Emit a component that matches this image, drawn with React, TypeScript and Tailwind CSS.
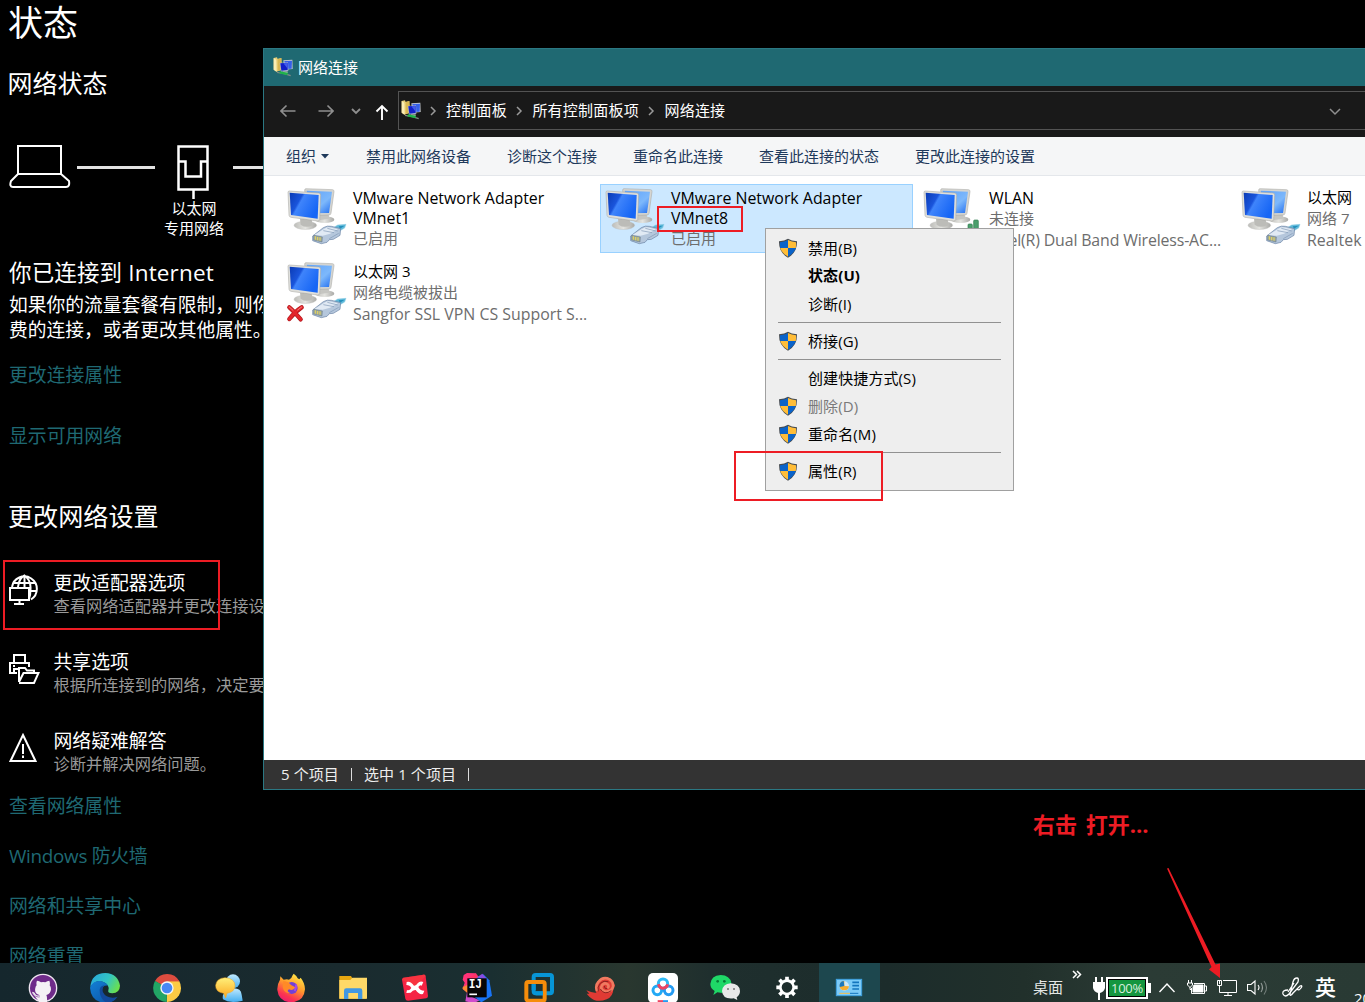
import React from "react";

/* ---------- Adapter icons ---------- */

type Badge = "cable" | "unplugged" | "wifi";

function AdapterIcon({ badge, id }: { badge: Badge; id: string }) {
  const screen = `screen-${id}`;
  const back = `back-${id}`;
  const stand = `stand-${id}`;
  return (
    <svg className="ml-[5px] mt-[3px] h-[57px] w-[60px] shrink-0 overflow-visible" viewBox="51 36 180 171">
      <defs>
        <linearGradient id={screen} x1="0" y1="0" x2="1" y2="0.5">
          <stop offset="0" stopColor="#0b3bb4" />
          <stop offset="0.38" stopColor="#1a55dc" />
          <stop offset="0.45" stopColor="#3f84fb" />
          <stop offset="1" stopColor="#1766f5" />
        </linearGradient>
        <linearGradient id={back} x1="0" y1="0" x2="1" y2="1">
          <stop offset="0" stopColor="#5fa2fa" />
          <stop offset="0.6" stopColor="#7db8fb" />
          <stop offset="1" stopColor="#1f6cf0" />
        </linearGradient>
        <linearGradient id={stand} x1="0" y1="0" x2="1" y2="0">
          <stop offset="0" stopColor="#bdbdb9" />
          <stop offset="0.5" stopColor="#e4e4e0" />
          <stop offset="1" stopColor="#a9a9a6" />
        </linearGradient>
      </defs>
      <ellipse cx="164" cy="131" rx="29" ry="10" fill={`url(#${stand})`} />
      <path d="M150 112 L175 108 L178 128 L150 132Z" fill="#c6c6c2" />
      <path d="M104 42 Q104 38 108 38 L188 41 Q193 42 192 47 L183 112 Q182 117 177 117 L112 119Z" fill="#d5d5d1" stroke="#a3a39f" strokeWidth="1.5" />
      <path d="M110 44 L186 47 L177 111 L118 112Z" fill={`url(#${back})`} />
      <ellipse cx="106" cy="148" rx="34" ry="12.5" fill={`url(#${stand})`} stroke="#b5b5b2" strokeWidth="1" />
      <path d="M90 128 L125 130 L128 148 Q108 158 92 146Z" fill="#bcbcb8" />
      <path d="M54 49 Q54 45 58 45 L147 51 Q153 52 152 58 L149 131 Q148 136 142 135 L63 124 Q58 123 57 118Z" fill="#dfdfdb" stroke="#a2a29e" strokeWidth="1.5" />
      <path d="M59 50 L146 57 L143 128 L63 117Z" fill={`url(#${screen})`} />
      {badge === "wifi" ? (
        <g fill="#4b9f6c" stroke="#2f7d4f" strokeWidth="2">
          <rect x="186" y="144" width="13" height="40" rx="3" />
          <rect x="203" y="132" width="14" height="52" rx="3" />
        </g>
      ) : (
        <g>
          <path d="M190 155 L203 147 L228 145 L224 156 L207 166Z" fill="#5fb9da" stroke="#8fcfe4" strokeWidth="1.5" />
          <path d="M206 151 L224 149 L210 158Z" fill="#238fbb" />
          <path d="M128 180 L160 155 Q172 148 184 151 L212 158 L210 178 L190 190 L178 191 L171 199 L154 203 L128 194Z" fill="#b5c7dc" stroke="#6681a3" strokeWidth="2" />
          <path d="M133 177 L163 158 Q173 152 184 155 L204 160 L180 173 L158 179Z" fill="#e1eaf4" />
          <path d="M160 164 L192 170 M172 157 L203 165 M178 188 L206 172" stroke="#7f97b5" strokeWidth="2" fill="none" />
          <path d="M131 178 L157 183 L156 198 L131 192Z" fill="#9fa99a" stroke="#5f7287" strokeWidth="1.5" />
          <path d="M136 181 V191 M143 183 V193 M150 184 V194" stroke="#e8d75c" strokeWidth="3" />
        </g>
      )}
      {badge === "unplugged" && (
        <g strokeLinecap="round">
          <path d="M58 172 Q70 182 92 208 M95 172 Q76 184 58 207" stroke="#b0171c" strokeWidth="13" fill="none" />
          <path d="M58 172 Q70 182 92 208 M95 172 Q76 184 58 207" stroke="#e3262c" strokeWidth="9" fill="none" />
          <path d="M58 171 L69 181 M95 171 L83 180" stroke="#f2817f" strokeWidth="3" fill="none" />
        </g>
      )}
    </svg>
  );
}

function NetworkFolderIcon() {
  return (
    <svg className="h-5 w-5 shrink-0" viewBox="0 0 60 60">
      <path d="M2 3 L12 1 L14 6 L25 3 L27 38 L10 44 L2 38Z" fill="#e9cf77" />
      <path d="M2 3 L10 8 L11 44 L2 38Z" fill="#fbedb3" />
      <path d="M14 6 L25 3 L26 38 L14 42Z" fill="#d9b752" />
      <path d="M31 10 L58 8 L59 36 L34 38Z" fill="#c5cad0" />
      <path d="M34 12 L57 11 L56 35 L38 36Z" fill="#3560e8" />
      <path d="M20 18 L45 16 L46 41 L24 44Z" fill="#b9bfd0" />
      <path d="M22 19 L44 17 L44 39 L25 41Z" fill="#1220c8" />
      <path d="M31 19 L43 18 L43 34Z" fill="#3f5bee" />
      <path d="M30 43 H44 V48 H30Z" fill="#b6bab6" />
      <path d="M12 46 L34 50 L53 56" stroke="#7f8c86" strokeWidth="4" fill="none" />
      <path d="M20 46 L44 51" stroke="#1fb34a" strokeWidth="7" fill="none" />
    </svg>
  );
}

function Shield() {
  return (
    <svg className="h-5 w-5 shrink-0" viewBox="0 0 60 60">
      <path d="M30 2 Q40 9 57 10 Q58 44 30 59 Q2 44 3 10 Q20 9 30 2Z" fill="#464b50" />
      <path d="M30 6 V30 H6.500 Q5.500 22 6 13 Q20 12 30 6Z" fill="#0a63c9" />
      <path d="M30 6 Q41 12 54 13 Q54.500 22 53.500 30 H30Z" fill="#ffbd38" />
      <path d="M6.500 30 H30 V56 Q11 45 6.500 30Z" fill="#ffbd38" />
      <path d="M30 30 H53.500 Q49 45 30 56Z" fill="#0a63c9" />
    </svg>
  );
}

/* ---------- Settings page ---------- */

function SettingLink({ children, className }: { children: React.ReactNode; className: string }) {
  return <a className={`block h-[26px] text-[18.85px] leading-[26px] text-[#1f6973] ${className}`}>{children}</a>;
}

function Option({ icon, title, text, className }: { icon: React.ReactNode; title: string; text: string; className: string }) {
  return (
    <div className={`flex h-12 ${className}`}>
      <div className="w-[44.5px] shrink-0">{icon}</div>
      <div>
        <div className="text-[18.85px] leading-6">{title}</div>
        <div className="text-[16.25px] leading-[22px] text-[#999]">{text}</div>
      </div>
    </div>
  );
}

function Settings() {
  return (
    <main className="h-[963px] w-[264px] overflow-hidden whitespace-nowrap pl-[9px] text-white">
      <h1 className="-ml-px h-[46px] text-[35px] leading-[45px]">状态</h1>
      <h2 className="-ml-[1.5px] mt-[22px] h-8 text-[25px] leading-[30px]">网络状态</h2>
      <div className="mt-[45px] flex h-[54px]">
        <svg className="h-11 w-[62px] shrink-0" viewBox="0 0 62 44" fill="none" stroke="#fff" strokeWidth="2">
          <path d="M9 1 H52 V29 H9Z M9 29 L2 36 Q0 42 4 42 H57 Q61 42 60 36 L52 29" />
        </svg>
        <div className="ml-[6px] mt-[21px] h-[3px] w-[78px] shrink-0 bg-[#e2e2e2]" />
        <svg className="ml-[21px] h-[54px] w-[34px] shrink-0" viewBox="0 0 34 54" fill="none" stroke="#fff" strokeWidth="2.500">
          <path d="M2.500 1.500 H31.500 V44.500 H2.500Z M2.500 16.500 H9.500 V31.500 H25 V16.500 H31.500 M17.500 45 V54" />
        </svg>
        <div className="ml-[23px] mt-[21px] h-[3px] w-[60px] shrink-0 bg-[#e2e2e2]" />
      </div>
      <div className="-mt-px ml-[145px] w-20 text-center text-[15px] leading-5">
        <div>以太网</div>
        <div>专用网络</div>
      </div>
      <h3 className="mt-5 h-[30px] text-[22.5px] leading-[30px] tracking-[0.15px]">你已连接到 Internet</h3>
      <p className="mt-1 text-[18.75px] leading-[25px]">
        如果你的流量套餐有限制，则你
        <br />
        费的连接，或者更改其他属性。
      </p>
      <SettingLink className="mt-5">更改连接属性</SettingLink>
      <SettingLink className="mt-[35px]">显示可用网络</SettingLink>
      <h2 className="-ml-px mt-[51px] h-[34px] text-[25.1px] leading-8">更改网络设置</h2>
      <Option
        className="mt-[37px]"
        title="更改适配器选项"
        text="查看网络适配器并更改连接设置"
        icon={
          <svg className="mt-[3px] h-8 w-[30px]" viewBox="0 0 30 32" fill="none" stroke="#fff" strokeWidth="2">
            <path d="M3 13 A12.500 12.500 0 1 1 22 25.500 M4 9 H26 M21 17 H28 M9 13 Q10 4 15.500 1.500 Q22 6 21.500 15 Q21.500 21 20 25 M15.500 1.500 V13" />
            <path d="M1 14 H20 V26 H1Z M10.500 26 V30 M5 30 H15" />
          </svg>
        }
      />
      <Option
        className="mt-[31px]"
        title="共享选项"
        text="根据所连接到的网络，决定要共享的内容"
        icon={
          <svg className="mt-[3px] h-8 w-[31px]" viewBox="0 0 31 32" fill="none" stroke="#fff" strokeWidth="2">
            <path d="M5 10 V2 H16 V10 M8 20 H1 V10 H20 V14 M4 13 H6 M5 20 V16 H11" />
            <path d="M10 29 V15 H16 L18 17.500 H25 V20 M10 30 H25 L29.500 20 H14.500 L10 29" />
          </svg>
        }
      />
      <Option
        className="mt-[31px]"
        title="网络疑难解答"
        text="诊断并解决网络问题。"
        icon={
          <svg className="mt-[4px] h-[30px] w-[28px]" viewBox="0 0 28 30" fill="none" stroke="#fff" strokeWidth="2">
            <path d="M14 2 L26.500 28 H1.500Z M14 11 V21 M14 22.500 V25" />
          </svg>
        }
      />
      <SettingLink className="mt-[16px]">查看网络属性</SettingLink>
      <SettingLink className="mt-6 tracking-[-0.3px]">Windows 防火墙</SettingLink>
      <SettingLink className="mt-6">网络和共享中心</SettingLink>
      <SettingLink className="mt-6">网络重置</SettingLink>
    </main>
  );
}

/* ---------- Network connections window ---------- */

function Crumb({ children }: { children: React.ReactNode }) {
  return (
    <>
      <svg className="mx-[9px] h-3 w-[7px] shrink-0" viewBox="0 0 7 12" fill="none" stroke="#9a9a9a" strokeWidth="1.500">
        <path d="M1 2 L5 6 L1 10" />
      </svg>
      <span className="mr-[0.5px] tracking-[0.22px]">{children}</span>
    </>
  );
}

interface AdapterProps {
  id: string;
  name: string[];
  details: string[];
  badge: Badge;
  selected?: boolean;
}

const isLatin = (line: string) => /^[\x20-\x7e]+$/.test(line);

function Adapter({ id, name, details, badge, selected }: AdapterProps) {
  return (
    <div className={selected ? "flex h-[69px] w-[313px] border border-[#99d1ff] bg-[#cce8ff]" : "flex h-[69px] w-[313px] border border-transparent"}>
      <div className="-ml-px flex">
        <AdapterIcon id={id} badge={badge} />
      </div>
      <div className={id === "wlan" ? "ml-[6px] mt-[2px] text-[15px] tracking-[-0.15px] text-[#6d6d6d]" : "ml-[6px] mt-[2px] text-[15px] text-[#6d6d6d]"}>
        {name.map((line) => (
          <div key={line} className={isLatin(line) ? "h-5 text-[15.9px] leading-[22px] tracking-normal text-black" : "h-5 leading-5 text-black"}>{line}</div>
        ))}
        {details.map((line) => (
          <div key={line} className={isLatin(line) ? "h-[21px] text-[15.9px] leading-6" : "h-[21px] leading-[22px] tracking-normal"}>{line}</div>
        ))}
      </div>
    </div>
  );
}

const adapters: AdapterProps[] = [
  { id: "vmnet1", name: ["VMware Network Adapter", "VMnet1"], details: ["已启用"], badge: "cable" },
  { id: "vmnet8", name: ["VMware Network Adapter", "VMnet8"], details: ["已启用"], badge: "cable", selected: true },
  { id: "wlan", name: ["WLAN"], details: ["未连接", "Intel(R) Dual Band Wireless-AC..."], badge: "wifi" },
  { id: "eth", name: ["以太网"], details: ["网络 7", "Realtek"], badge: "cable" },
  { id: "eth3", name: ["以太网 3"], details: ["网络电缆被拔出", "Sangfor SSL VPN CS Support S..."], badge: "unplugged" },
];

function NetworkWindow() {
  return (
    <section className="absolute left-[263px] top-[48px] flex h-[742px] w-[1110px] flex-col whitespace-nowrap border border-[#2b7883] text-[15px]">
      <header className="flex h-[37px] shrink-0 items-center bg-[#1f6972] pl-[9px] text-white">
        <div className="-mt-[2px]">
          <NetworkFolderIcon />
        </div>
        <span className="ml-[5px]">网络连接</span>
      </header>
      <nav className="flex h-[51px] shrink-0 items-center bg-[#191919] text-white">
        <svg className="-mt-[2px] ml-4 h-4 w-4" viewBox="0 0 16 16" fill="none" stroke="#8f8f8f" strokeWidth="1.600"><path d="M15.500 8 H1 M6.500 2.500 L1 8 L6.500 13.500" /></svg>
        <svg className="-mt-[2px] ml-[22px] h-4 w-4" viewBox="0 0 16 16" fill="none" stroke="#8f8f8f" strokeWidth="1.600"><path d="M.5 8 H15 M9.500 2.500 L15 8 L9.500 13.500" /></svg>
        <svg className="-mt-[2px] ml-[17px] h-3 w-[10px]" viewBox="0 0 10 12" fill="none" stroke="#8f8f8f" strokeWidth="1.800"><path d="M1 4 L5 8 L9 4" /></svg>
        <svg className="ml-[14px] h-4 w-[14px]" viewBox="0 0 14 16" fill="none" stroke="#fff" strokeWidth="1.900"><path d="M7 16 V2 M1.500 7.500 L7 2 L12.500 7.500" /></svg>
        <div className="ml-[9px] mt-[-2px] flex h-[39px] flex-1 items-center border border-[#535353] pl-[2px]">
          <div className="-mt-[2px]">
            <NetworkFolderIcon />
          </div>
          <Crumb>控制面板</Crumb>
          <Crumb>所有控制面板项</Crumb>
          <Crumb>网络连接</Crumb>
          <svg className="ml-auto mr-[30px] h-3 w-3" viewBox="0 0 12 12" fill="none" stroke="#8f8f8f" strokeWidth="1.500"><path d="M1 4 L6 9 L11 4" /></svg>
        </div>
      </nav>
      <div className="flex h-[39px] shrink-0 items-center gap-9 border-b border-[#e4e7eb] bg-[#f5f6f7] pl-[22px] text-[#1e395b]">
        <span className="flex items-center gap-[5px] pr-px">
          组织
          <svg className="h-[5px] w-2" viewBox="0 0 8 5"><path d="M0 0 H8 L4 4.500Z" fill="#1e395b" /></svg>
        </span>
        <span>禁用此网络设备</span>
        <span>诊断这个连接</span>
        <span>重命名此连接</span>
        <span>查看此连接的状态</span>
        <span>更改此连接的设置</span>
      </div>
      <div className="flex-1 bg-white pl-[18px] pt-2">
        <div className="grid w-[1272px] grid-cols-[repeat(4,318px)] gap-y-[5px]">
          {adapters.map((a) => (
            <Adapter key={a.id} {...a} />
          ))}
        </div>
      </div>
      <footer className="flex h-[29px] shrink-0 items-center bg-[#333] pl-[17px] text-[#eee]">
        <span className="tracking-[0.1px]">5 个项目</span>
        <i className="ml-[12px] mr-3 h-[13px] w-px bg-[#ddd]" />
        <span className="tracking-[0.1px]">选中 1 个项目</span>
        <i className="ml-3 h-[13px] w-px bg-[#ddd]" />
      </footer>
    </section>
  );
}

function MenuItem({ label, shield, className = "" }: { label: string; shield?: boolean; className?: string }) {
  return (
    <div className={`flex h-7 items-center pl-3 ${className}`}>
      <div className="mt-[-1px] w-[30px]">{shield && <Shield />}</div>
      <span className="tracking-[0.1px]">{label}</span>
    </div>
  );
}

function MenuLine() {
  return <div className="mx-3 my-1 h-px bg-[#919191]" />;
}

function ContextMenu() {
  return (
    <div className="absolute left-[765px] top-[228px] h-[263px] w-[249px] whitespace-nowrap border border-[#a0a0a0] bg-[#eee] py-[5px] text-[15px] text-black">
      <MenuItem label="禁用(B)" shield />
      <MenuItem label="状态(U)" className="pb-[2px] font-bold" />
      <MenuItem label="诊断(I)" />
      <MenuLine />
      <MenuItem label="桥接(G)" shield />
      <MenuLine />
      <MenuItem label="创建快捷方式(S)" />
      <MenuItem label="删除(D)" shield className="text-[#7a7a7a]" />
      <MenuItem label="重命名(M)" shield />
      <MenuLine />
      <MenuItem label="属性(R)" shield />
    </div>
  );
}

/* ---------- Taskbar ---------- */

const iconBox = "h-[30px] w-[30px]";

const apps: { name: string; icon: React.ReactNode }[] = [
  {
    name: "github",
    icon: (
      <svg className={iconBox} viewBox="0 0 90 90">
        <circle cx="45" cy="45" r="43" fill="#f0e6f2" />
        <circle cx="45" cy="45" r="39" fill="#6f2b8a" />
        <path d="M35 88 V72 Q24 75 19 66 Q17 62 13 61 M34 66 Q18 62 22 45 Q23 39 26 37 Q24 29 27 23 Q34 24 39 28 Q45 26 52 28 Q58 23 64 23 Q67 30 65 37 Q69 41 69 49 Q68 63 55 66 Q58 70 57 88 H35 V70Z" fill="#f4f1f5" />
        <path d="M13 58 Q18 59 21 65 Q25 71 35 69" stroke="#f4f1f5" strokeWidth="4" fill="none" />
      </svg>
    ),
  },
  {
    name: "edge",
    icon: (
      <svg className={iconBox} viewBox="0 0 90 90">
        <defs>
          <linearGradient id="edge-top" x1="0" y1="0.2" x2="1" y2="0.6"><stop offset="0" stopColor="#28a9dc" /><stop offset="0.55" stopColor="#32c5c4" /><stop offset="1" stopColor="#6be04c" /></linearGradient>
          <linearGradient id="edge-base" x1="0" y1="0" x2="1" y2="1"><stop offset="0" stopColor="#1380d6" /><stop offset="1" stopColor="#0b4fa0" /></linearGradient>
        </defs>
        <path d="M1 42 Q4 1 46 0 Q84 2 90 38 Q89 60 67 61 Q52 61 55 52 Q60 34 38 26 Q14 21 1 42Z" fill="url(#edge-top)" />
        <path d="M0 44 Q8 22 31 24 Q48 27 54 38 Q37 36 34 53 Q36 75 60 78 Q73 78 83 71 Q71 89 47 90 Q3 87 0 44Z" fill="url(#edge-base)" />
        <path d="M29 50 Q31 38 44 37 Q35 44 39 58 Q49 78 80 73 Q70 90 49 89 Q28 76 29 50Z" fill="#12499b" />
      </svg>
    ),
  },
  {
    name: "chrome",
    icon: (
      <svg className={iconBox} viewBox="0 0 90 90">
        <path d="M45 45 L9 24 A42 42 0 0 1 82 25Z" fill="#dc4c3f" />
        <path d="M45 45 L82 25 A42 42 0 0 1 44 87Z" fill="#fdcb44" />
        <path d="M45 45 L44 87 A42 42 0 0 1 9 24Z" fill="#22a565" />
        <path d="M45 25 H82 L63 45Z" fill="#fdcb44" /><path d="M45 25 H82 L80 22 L45 20Z" fill="#dc4c3f" />
        <path d="M28 55 L9 24 L45 45Z" fill="#22a565" />
        <circle cx="45" cy="45" r="20" fill="#f5f5f5" /><circle cx="45" cy="45" r="16" fill="#4688f4" />
      </svg>
    ),
  },
  {
    name: "messenger",
    icon: (
      <svg className={`${iconBox} -ml-[3px]`} viewBox="0 0 90 90">
        <defs><linearGradient id="msg-blue" x1="0" y1="0" x2="0" y2="1"><stop offset="0" stopColor="#bfe9ff" /><stop offset="1" stopColor="#45aff0" /></linearGradient><linearGradient id="msg-gold" x1="0" y1="0" x2="0" y2="1"><stop offset="0" stopColor="#fff07a" /><stop offset="1" stopColor="#fba720" /></linearGradient></defs>
        <circle cx="60" cy="25" r="21" fill="url(#msg-blue)" />
        <path d="M58 46 Q84 44 86 65 L89 83 Q50 92 30 79 Q24 58 58 46Z" fill="url(#msg-blue)" />
        <path d="M36 14 Q66 16 66 39 Q65 57 42 61 L38 75 L32 61 Q7 57 8 37 Q10 16 36 14Z" fill="url(#msg-gold)" stroke="#f7a825" strokeWidth="1.500" />
      </svg>
    ),
  },
  {
    name: "firefox",
    icon: (
      <svg className={iconBox} viewBox="0 0 90 90">
        <defs><linearGradient id="fox" x1="0.8" y1="0" x2="0.3" y2="1"><stop offset="0" stopColor="#fff04a" /><stop offset="0.45" stopColor="#ff9a2c" /><stop offset="0.8" stopColor="#fb3450" /><stop offset="1" stopColor="#ee1b71" /></linearGradient></defs>
        <path d="M53 2 Q61 7 65 16 L70 19 L74 14 Q87 30 87 49 Q84 86 46 88 Q8 86 4 51 Q3 34 12 20 L13 10 L23 20 Q34 18 39 20 Q47 17 49 8Z" fill="url(#fox)" />
        <circle cx="47" cy="45" r="18" fill="#7140d7" />
        <path d="M22 24 Q38 26 45 36 L58 43 Q53 55 39 49 Q29 55 44 61 Q24 62 20 42Z" fill="#ff8a27" />
        <path d="M60 34 Q62 44 56 54" stroke="#a74be1" strokeWidth="6" fill="none" />
      </svg>
    ),
  },
  {
    name: "explorer",
    icon: (
      <svg className={`${iconBox} mt-[2px]`} viewBox="0 0 90 90">
        <path d="M4 6 H39 L44 14 H84 V74 H4Z" fill="#e7a711" />
        <path d="M4 18 H37 L43 11 H87 V74 H4Z" fill="#ffd968" />
        <path d="M18 75 V50 Q18 43 25 43 H66 Q73 43 73 50 V75 H60 V57 H31 V75Z" fill="#4298e2" />
      </svg>
    ),
  },
  {
    name: "xmind",
    icon: (
      <svg className={`${iconBox} mt-[2px]`} viewBox="0 0 90 90">
        <path d="M10 11 L70 2 Q76 1 77 7 L84 66 Q84 71 79 73 L24 80 Q17 80 16 74 L6 17 Q6 12 10 11Z" fill="#f52344" />
        <path d="M10 11 L70 2 Q76 1 77 7 L45 40 L6 17Z" fill="#fa3d3d" opacity="0.600" />
        <path d="M20 24 Q31 20 42 35 Q48 36 53 28 Q60 19 70 24 L65 35 Q60 32 55 39 Q59 50 73 50 L69 60 Q57 63 47 48 Q39 47 32 56 L19 57 L21 48 Q28 51 34 42 Q30 33 19 33Z" fill="#fff" />
      </svg>
    ),
  },
  {
    name: "intellij",
    icon: (
      <svg className={iconBox} viewBox="0 0 90 90">
        <path d="M5 6 L15 0 L42 1 L39 32 L17 61 L2 47 L8 29 L2 20Z" fill="#ff3278" />
        <path d="M42 1 L52 15 L34 27 L18 18Z" fill="#fe3367" /><path d="M2 42 L24 32 L23 65 L2 48Z" fill="#fb8a32" />
        <path d="M10 85 L15 58 L30 72 L53 82 L36 90Z" fill="#d04ccc" />
        <path d="M40 18 L64 4 L82 22 L90 68 L58 88 L39 73Z" fill="#1974f6" /><path d="M46 12 L61 2 L77 21Z" fill="#8a4ce0" />
        <rect x="16" y="16" width="58" height="57" fill="#070707" />
        <text x="20" y="46" fontFamily="Liberation Mono" fontWeight="bold" fontSize="36" fill="#fff" textLength="40" lengthAdjust="spacingAndGlyphs">IJ</text>
        <path d="M22 64 H45" stroke="#fff" strokeWidth="5" />
      </svg>
    ),
  },
  {
    name: "vmware",
    icon: (
      <svg className={iconBox} viewBox="0 0 90 90" fill="none" strokeWidth="12">
        <rect x="29" y="6" width="55" height="55" rx="6" stroke="#0795d6" />
        <rect x="7" y="27" width="55" height="56" rx="6" stroke="#f68d0b" />
        <path d="M35 61 H57" stroke="#0795d6" />
        <path d="M29 34 V51" stroke="#0795d6" />
      </svg>
    ),
  },
  {
    name: "shell",
    icon: (
      <svg className={`${iconBox} -ml-[2px]`} viewBox="0 0 90 90">
        <path d="M4 52 Q23 61 34 59 Q28 42 38 26 Q54 5 76 17 Q89 27 91 43 L85 37 Q88 69 65 79 Q34 91 13 71 L5 62 L13 62Z" fill="#e03a34" />
        <path d="M36 54 Q30 38 40 27 Q54 9 74 19 Q86 27 84 42 Q79 58 60 55 Q44 49 51 37 Q59 26 69 35 Q73 43 66 45" fill="none" stroke="#ef7a60" strokeWidth="8" />
        <path d="M40 55 Q36 42 46 31 Q56 21 70 26 M46 48 Q58 68 79 53 M58 39 Q58 49 67 47" stroke="#8d2421" strokeWidth="3" fill="none" />
      </svg>
    ),
  },
  {
    name: "netdisk",
    icon: (
      <svg className={iconBox} viewBox="0 0 90 90" fill="none" strokeWidth="9">
        <rect width="90" height="90" rx="15" fill="#fff" />
        <circle cx="28" cy="52" r="13" stroke="#22a9f5" /><circle cx="62" cy="52" r="13" stroke="#249bf2" />
        <circle cx="45" cy="32" r="14" stroke="#2fbaf5" />
        <path d="M31 34 Q36 47 45 46 Q56 45 59 34" stroke="#ee4260" />
        <path d="M29 86 H45" stroke="#ee4260" /><path d="M45 86 H60" stroke="#249bf2" />
      </svg>
    ),
  },
  {
    name: "wechat",
    icon: (
      <svg className={iconBox} viewBox="0 0 90 90">
        <path d="M32 6 Q60 7 64 30 Q64 52 37 60 L22 58 L10 66 L14 54 Q1 46 1 33 Q3 8 32 6Z" fill="#1fd867" />
        <circle cx="23" cy="25" r="4" fill="#087b37" /><circle cx="43" cy="25" r="4" fill="#087b37" />
        <path d="M62 31 Q89 33 90 54 Q90 66 80 73 L82 81 L71 76 Q38 80 36 54 Q38 33 62 31Z" fill="#e8e8e8" />
        <circle cx="54" cy="48" r="3" fill="#777" /><circle cx="72" cy="48" r="3" fill="#777" />
      </svg>
    ),
  },
  {
    name: "settings",
    icon: (
      <svg className={`${iconBox} -ml-px`} viewBox="0 0 90 90" fill="none" stroke="#fff">
        <circle cx="45" cy="43" r="20" strokeWidth="8" />
        <path d="M45 11 V22 M45 64 V75 M13 43 H24 M66 43 H77 M22.400 20.400 L30.200 28.200 M59.800 57.800 L67.600 65.600 M22.400 65.600 L30.200 57.800 M59.800 28.200 L67.600 20.400" strokeWidth="11" />
      </svg>
    ),
  },
  {
    name: "control-panel",
    icon: (
      <svg className={`${iconBox} -ml-[2px]`} viewBox="0 0 90 90">
        <rect x="7" y="19" width="76" height="49" fill="#7ccbf8" stroke="#3ea1df" strokeWidth="3" />
        <circle cx="31" cy="39" r="14" fill="#cce9f8" /><path d="M31 39 V24 A14 14 0 1 0 45 40Z" fill="#f4ae31" /><path d="M31 39 L29 24 A14 14 0 0 0 17 42Z" fill="#1878be" />
        <path d="M55 28 H75 M55 38 H75 M55 48 H75" stroke="#1475bd" strokeWidth="5" />
        <path d="M16 61 H48" stroke="#f5bd4a" strokeWidth="3" /><path d="M48 61 H73" stroke="#1475bd" strokeWidth="3" />
      </svg>
    ),
  },
];

function Taskbar() {
  return (
    <footer className="flex h-[39px] items-start overflow-hidden whitespace-nowrap bg-[linear-gradient(90deg,#15272d_0%,#1a2b2f_25%,#1a2f31_36%,#29372f_46%,#1f2f2e_52%,#1c2c2b_65%,#21302b_75%,#2b3b35_84%,#293a34_100%)] pl-3 text-white">
      {apps.map((app) => (
        <div
          key={app.name}
          className={
            app.name === "control-panel"
              ? "ml-[1px] flex h-[50px] w-[61px] shrink-0 items-center justify-center bg-[#1d474e]"
              : "flex h-[50px] w-[62px] shrink-0 items-center justify-center"
          }
        >
          {app.icon}
        </div>
      ))}
      <span className="ml-[153px] mt-3 text-[15px] leading-6 text-[#e4e7e5]">桌面</span>
      <svg className="ml-[9px] mt-[7px] h-[9px] w-[10px] shrink-0" viewBox="0 0 10 9" fill="none" stroke="#fff" strokeWidth="1.500"><path d="M1 1 L4.500 4.500 L1 8 M5 1 L8.500 4.500 L5 8" /></svg>
      <svg className="ml-[10px] mt-[14px] h-[23px] w-[14px] shrink-0" viewBox="0 0 14 23" fill="#fff"><path d="M3 0 H5 V5 H9 V0 H11 V5 H13 V11 Q12 15 8 16 V23 H6 V16 Q2 15 1 11 V5 H3Z" /></svg>
      <div className="mt-[14px] flex h-[22px] w-[42px] shrink-0 items-center justify-center border-2 border-white bg-[#14963f] text-[13px] leading-none tracking-[-0.3px] text-[#d9eedf] outline outline-1 -outline-offset-[3px] outline-black">100%</div>
      <div className="mt-5 h-[10px] w-[3px] shrink-0 bg-white" />
      <svg className="ml-[8px] mt-[20px] h-[10px] w-4 shrink-0" viewBox="0 0 16 10" fill="none" stroke="#fff" strokeWidth="1.400"><path d="M.5 9 L8 1 L15.500 9" /></svg>
      <svg className="ml-[12px] mt-[17px] h-[15px] w-5 shrink-0" viewBox="0 0 20 15" fill="none" stroke="#fff" strokeWidth="1"><path d="M1.500 0 V3 M4.500 0 V3 M.5 3 H5.500 V5 L3 7.500 L.5 5Z M3 7 V9.500 H4.500 M7 3.500 H17.500 V13.500 H4.500 V8 M18 6 H19.500 V11 H18" /><path d="M7 5 H16 V12 H6 V7Z" fill="#fff" /></svg>
      <svg className="ml-[10px] mt-[17px] h-4 w-5 shrink-0" viewBox="0 0 20 16" fill="none" stroke="#fff" strokeWidth="1"><path d="M6 .5 H19.500 V12.500 H2.500 V6 M.5 .5 H4.500 V5.500 H.5Z M2.500 1 V4 M11 13 V15.500 M7 15.500 H15" /></svg>
      <svg className="ml-[10px] mt-[16px] h-[17px] w-[21px] shrink-0" viewBox="0 0 21 17" fill="none" stroke="#fff" strokeWidth="1.100"><path d="M.5 5.500 H4 L8 2 V15 L4 11.500 H.5Z M11 6 Q13 8.500 11 11" /><path d="M14 4 Q17 8.500 14 13" opacity="0.500" /><path d="M17 2 Q22 8.500 17 15.500" opacity="0.350" /></svg>
      <svg className="ml-[14px] mt-[14px] h-[22px] w-[21px] shrink-0" viewBox="0 0 21 22" fill="none" stroke="#fff" strokeWidth="1.300"><path d="M6 13 Q0 13 1 17 Q3 21 7 17 L16 5 Q17 1 15 1 Q12 1 11 5 L8 17 Q8 20 11 16 L18 9 Q21 8 19 11 Q17 14 15 12 M12 6 L6 15" /></svg>
      <span className="ml-[12px] mt-[10px] text-[21px] font-medium leading-7">英</span>
      <span className="ml-[18px] mt-[25px] text-[15px] leading-5">20</span>
    </footer>
  );
}

/* ---------- Desktop ---------- */

export default function App() {
  return (
    <div className="relative h-[1002px] w-[1365px] overflow-hidden bg-black [font-family:'Open_Sans','Noto_Sans_CJK_SC',sans-serif]">
      <Settings />
      <Taskbar />
      <NetworkWindow />
      <ContextMenu />
      <div className="absolute left-[3px] top-[560px] h-[70px] w-[217px] border-2 border-[#ed1c24]" />
      <div className="absolute left-[657px] top-[206px] h-[26px] w-[86px] border-2 border-[#ed1c24]" />
      <div className="absolute left-[734px] top-[451px] h-[50px] w-[149px] border-2 border-[#ed1c24]" />
      <div className="absolute left-[1033px] top-[808px] whitespace-nowrap text-[22px] font-bold leading-8 text-[#ed1c24] [word-spacing:3px]">右击 打开...</div>
      <svg className="absolute left-[1160px] top-[860px] h-[120px] w-[70px]" viewBox="0 0 70 120" fill="#ed1c24">
        <path d="M7 8.500 L8.500 8 L55.500 104.500 L60 103.500 L60 118 L49 109.500 L51.500 107Z" />
      </svg>
    </div>
  );
}
